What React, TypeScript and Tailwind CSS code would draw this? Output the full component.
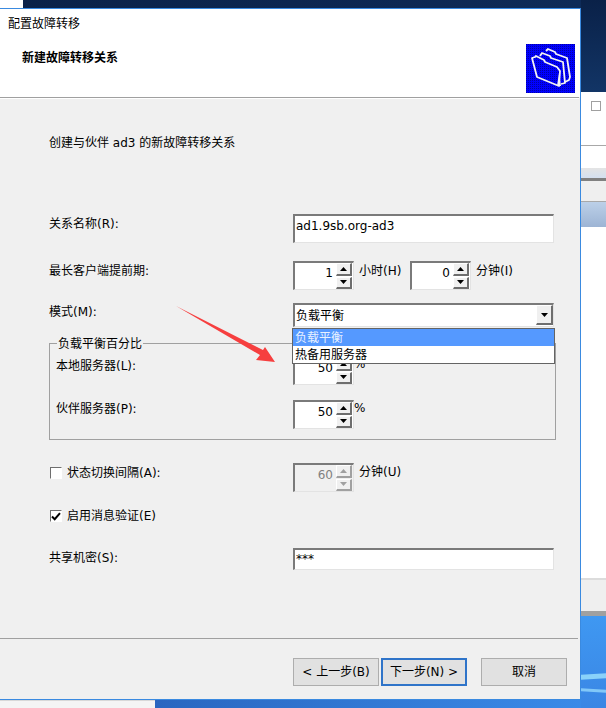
import React from "react";

const font = { fontFamily: '"DejaVu Sans", "Noto Sans CJK SC", sans-serif' };

function Sunken({ className = "", children }: { className?: string; children?: React.ReactNode }) {
  return (
    <div className={"border-t-2 border-l-2 border-r border-b border-t-[#7a7a7a] border-l-[#7a7a7a] border-r-[#e3e3e3] border-b-[#e3e3e3] " + className}>
      {children}
    </div>
  );
}

function Tri({ up, dim }: { up?: boolean; dim?: boolean }) {
  return (
    <svg width="7" height="4" viewBox="0 0 7 4">
      <polygon points={up ? "3.5,0 7,4 0,4" : "0,0 7,0 3.5,4"} fill={dim ? "#a0a0a0" : "#000"} />
    </svg>
  );
}

function SpinBtn({ up, dim }: { up?: boolean; dim?: boolean }) {
  return (
    <div className={"flex h-[13px] w-[16px] items-center justify-center border-t border-l border-t-white border-l-white border-r-2 border-b-2 bg-[#f0f0f0] " + (dim ? "border-r-[#a0a0a0] border-b-[#a0a0a0]" : "border-r-[#6e6e6e] border-b-[#6e6e6e]")}>
      <Tri up={up} dim={dim} />
    </div>
  );
}

function Spinner({ value, disabled }: { value: string; disabled?: boolean }) {
  return (
    <Sunken className={"flex h-[29px] w-[61px] shrink-0 " + (disabled ? "bg-[#f0f0f0] text-[#808080]" : "bg-white")}>
      <div className="flex-1 pr-[3px] pt-[2px] text-right leading-4">{value}</div>
      <div className="mr-[1px] flex w-[16px] flex-col gap-[1px]">
        <SpinBtn up dim={disabled} />
        <SpinBtn dim={disabled} />
      </div>
    </Sunken>
  );
}

function CheckBox({ checked }: { checked?: boolean }) {
  return (
    <div className="ml-[1px] flex h-[12px] w-[12px] items-center justify-center border-t border-l border-t-[#6e6e6e] border-l-[#6e6e6e] border-r border-b border-r-white border-b-white bg-white">
      {checked && (
        <svg width="10" height="9" viewBox="0 0 10 9">
          <path d="M1 4.5 L3.7 7.2 L9 1.2" fill="none" stroke="#000" strokeWidth="2" />
        </svg>
      )}
    </div>
  );
}

function Btn({ label, primary }: { label: string; primary?: boolean }) {
  return (
    <div className={"flex h-[28px] w-[86px] items-center justify-center bg-[#e1e1e1] " + (primary ? "border-2 border-[#2f74c9]" : "border border-[#adadad]")}>
      {label}
    </div>
  );
}

function Dots() {
  const cells: React.ReactNode[] = [];
  for (let y = 0; y < 49; y += 2) {
    for (let x = 0; x < 49; x += 2) {
      cells.push(<rect key={x + "-" + y} x={x} y={y} width="1" height="1" fill="#0000a8" />);
    }
  }
  return <>{cells}</>;
}

const folderPaths = [
  "M20 7 L22 5 L29 8 L30 10 L41 14 L44 33 L43 36 L39 38",
  "M14 12 L16 9 L24 12 L25 14 L37 18 L39 39 L35 40",
  "M6 14 L9 13 L10 12 L18 16 L19 18 L31 23 L34 27 L33 42 L11 33 Z",
];

function FolderIcon() {
  return (
    <svg width="49" height="49" viewBox="0 0 49 49" shapeRendering="crispEdges" className="shrink-0">
      <rect width="49" height="49" fill="#0000ff" />
      <Dots />
      <g shapeRendering="auto" fill="none" stroke="#f4f4f4" strokeWidth="1.8" strokeLinejoin="round">
        {folderPaths.map((d) => (
          <path key={d} d={d} />
        ))}
      </g>
      <path shapeRendering="auto" d="M31 42 L33 29 L35 42 Z" fill="#f4f4f4" />
    </svg>
  );
}

function DesktopRight() {
  return (
    <div className="flex h-full w-full flex-col">
      <div className="h-[92px] bg-gradient-to-b from-[#0a2148] to-[#123566]" />
      <div className="h-[53px] bg-white pl-[10px] pt-[9px]">
        <div className="h-[10px] w-[10px] border border-[#a0a0a0]" />
      </div>
      <div className="h-[23px] border-t border-t-[#a8a8a8] bg-white" />
      <div className="h-[10px] bg-gradient-to-b from-[#e4e4e4] to-[#d4e0f0]" />
      <div className="h-[3px] bg-[#808080]" />
      <div className="h-[20px] bg-[#efefef]" />
      <div className="h-[26px] border-t border-t-[#a8a8a8] bg-gradient-to-b from-[#bcd0e8] to-[#9db4d4]" />
      <div className="h-[351px] bg-white" />
      <div className="h-[33px] border-t-2 border-t-[#dcdcdc] bg-[#efefef]" />
      <div className="h-[5px] bg-[#a0a0a0]" />
      <div className="relative flex-1 bg-gradient-to-b from-[#3f98f2] to-[#3a86e4]">
        <div className="absolute left-0 right-0 top-[58px] h-[5px] -skew-y-3 bg-[#8ad2fa]" />
        <div className="absolute left-0 right-0 top-[73px] h-[3px] skew-y-3 bg-[#82c8f8]" />
      </div>
    </div>
  );
}

export default function App() {
  return (
    <div className="relative h-[708px] w-[606px] overflow-hidden bg-[#3578d8] text-[12px] leading-4 text-black" style={font}>
      {/* desktop behind the dialog */}
      <div className="absolute left-0 top-0 h-[8px] w-[581px] bg-gradient-to-r from-[#0a2148] to-[#0e2b58]" />
      <div className="absolute left-0 top-0 h-[8px] w-[23px] bg-white" />
      <div className="absolute left-[581px] top-0 h-[708px] w-[25px]">
        <DesktopRight />
      </div>
      <div className="absolute left-0 top-[700px] h-[8px] w-[155px] border-t border-t-[#d8d8d8] bg-[#f4f4f4]" />
      <div className="absolute left-[155px] top-[699px] h-[9px] w-[426px] bg-gradient-to-r from-[#2a66c0] to-[#3a8ae8]" />

      {/* dialog */}
      <div className="absolute left-0 top-[8px] flex h-[692px] w-[581px] flex-col border-t border-r border-b border-[#3a8ae0] bg-[#f0f0f0]">
        <div className="flex h-[88px] shrink-0 justify-between bg-white pr-[5px]">
          <div>
            <div className="pl-[8px] pt-[7px]">配置故障转移</div>
            <div className="pl-[22px] pt-[18px] font-bold">新建故障转移关系</div>
          </div>
          <div className="pt-[35px]">
            <FolderIcon />
          </div>
        </div>
        <div className="mr-[1px] h-[2px] shrink-0 border-b border-b-white bg-[#a0a0a0]" />

        <div className="relative flex-1 pl-[49px]">
          <div className="pt-[36px]">创建与伙伴 ad3 的新故障转移关系</div>

          <div className="mt-[63px] flex">
            <div className="w-[244px] pt-[2px]">关系名称(R):</div>
            <Sunken className="h-[29px] w-[261px] bg-white pl-[1px] pt-[2px]">ad1.9sb.org-ad3</Sunken>
          </div>

          <div className="mt-[18px] flex">
            <div className="w-[244px] pt-[2px]">最长客户端提前期:</div>
            <Spinner value="1" />
            <div className="w-[56px] pl-[5px] pt-[2px]">小时(H)</div>
            <Spinner value="0" />
            <div className="pl-[5px] pt-[2px]">分钟(I)</div>
          </div>

          <div className="relative mt-[13px] flex">
            <div className="w-[244px] pt-[1px]">模式(M):</div>
            <Sunken className="flex h-[24px] w-[261px] items-start justify-between bg-white pl-[1px] pt-[3px]">
              <span>负载平衡</span>
              <div className="mt-[-3px] flex h-[20px] w-[17px] items-center justify-center border-t border-l border-t-white border-l-white border-r-2 border-b-2 border-r-[#6e6e6e] border-b-[#6e6e6e] bg-[#f0f0f0]">
                <Tri />
              </div>
            </Sunken>
            {/* open drop-down list */}
            <div className="absolute left-[243px] top-[25px] z-20 w-[263px] border border-[#646464] bg-white">
              <div className="h-[17px] bg-[#5599ff] pl-[2px] pt-[1px] text-[#e8f1ff]">负载平衡</div>
              <div className="h-[17px] pl-[2px] pt-[1px]">热备用服务器</div>
            </div>
          </div>

          <div className="relative mt-[16px] h-[97px] w-[507px] border border-[#a0a0a0] pl-[6px] pt-[12px]">
            <div className="absolute left-[7px] top-[-8px] bg-[#f0f0f0] px-[1px]">负载平衡百分比</div>
            <div className="flex">
              <div className="w-[237px] pt-[2px]">本地服务器(L):</div>
              <Spinner value="50" />
              <div>%</div>
            </div>
            <div className="mt-[15px] flex">
              <div className="w-[237px] pt-[1px]">伙伴服务器(P):</div>
              <Spinner value="50" />
              <div>%</div>
            </div>
          </div>

          <div className="mt-[23px] flex">
            <div className="mt-[2px] flex h-[16px] w-[244px] items-center gap-[5px] self-start">
              <CheckBox />
              <span>状态切换间隔(A):</span>
            </div>
            <Spinner value="60" disabled />
            <div className="pl-[5px] pt-[1px]">分钟(U)</div>
          </div>

          <div className="mt-[16px] flex h-[16px] items-center gap-[5px]">
            <CheckBox checked />
            <span>启用消息验证(E)</span>
          </div>

          <div className="mt-[24px] flex">
            <div className="w-[244px] pt-[2px]">共享机密(S):</div>
            <Sunken className="h-[22px] w-[261px] bg-white pl-[1px] pt-[1px]">***</Sunken>
          </div>

          {/* red annotation arrow */}
          <svg width="110" height="70" viewBox="0 0 110 70" className="absolute left-[170px] top-[207px] z-30">
            <polygon points="6,0 93,44 95,41 105,56 86,54 90,49" fill="#f63f3f" />
          </svg>
        </div>

        <div className="mr-[2px] h-[61px] shrink-0 border-t border-t-[#a0a0a0] pl-[293px] pt-[19px]">
          <div className="flex">
            <Btn label="< 上一步(B)" />
            <div className="ml-[2px]"><Btn label="下一步(N) >" primary /></div>
            <div className="ml-[14px]"><Btn label="取消" /></div>
          </div>
        </div>
      </div>
    </div>
  );
}
